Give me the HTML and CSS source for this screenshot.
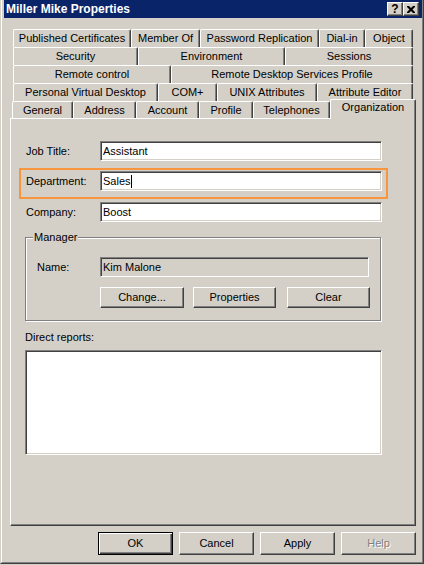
FILE: index.html
```html
<!DOCTYPE html>
<html lang="en">
<head>
<meta charset="utf-8">
<title>Miller Mike Properties</title>
<link rel="stylesheet" href="styles.css">
</head>
<body>
<div class="window">
  <div class="frame">
    <div class="titlebar">
      <span class="title">Miller Mike Properties</span>
      <div class="caption-btns">
        <span class="cap-btn help">?</span>
        <span class="cap-btn close">
          <svg width="8" height="7" viewBox="0 0 8 7"><path d="M0 0h2l2 2 2-2h2v1L5.5 3.5 8 6v1H6L4 5 2 7H0V6l2.5-2.5L0 1z" fill="#000"/></svg>
        </span>
      </div>
    </div>

    <div class="tabs">
      <div class="tab-row">
        <div class="tab w118">Published Certificates</div>
        <div class="tab w69">Member Of</div>
        <div class="tab w119">Password Replication</div>
        <div class="tab w46">Dial-in</div>
        <div class="tab w48">Object</div>
      </div>
      <div class="tab-row">
        <div class="tab w125">Security</div>
        <div class="tab w147">Environment</div>
        <div class="tab w128">Sessions</div>
      </div>
      <div class="tab-row">
        <div class="tab w158">Remote control</div>
        <div class="tab w242">Remote Desktop Services Profile</div>
      </div>
      <div class="tab-row">
        <div class="tab w145">Personal Virtual Desktop</div>
        <div class="tab w59">COM+</div>
        <div class="tab w100">UNIX Attributes</div>
        <div class="tab w96">Attribute Editor</div>
      </div>
      <div class="tab-row last">
        <div class="tab w61">General</div>
        <div class="tab w63">Address</div>
        <div class="tab w63">Account</div>
        <div class="tab w54">Profile</div>
        <div class="tab w77">Telephones</div>
        <div class="tab selected">Organization</div>
      </div>
    </div>

    <div class="panel">
      <div class="field-row">
        <label class="lbl">Job Title:</label>
        <div class="input">Assistant</div>
      </div>
      <div class="highlight">
        <div class="field-row inner">
          <label class="lbl">Department:</label>
          <div class="input">Sales<span class="caret"></span></div>
        </div>
      </div>
      <div class="field-row company">
        <label class="lbl">Company:</label>
        <div class="input">Boost</div>
      </div>

      <div class="groupbox">
        <span class="legend">Manager</span>
        <div class="name-row">
          <label class="lbl name-lbl">Name:</label>
          <div class="input readonly">Kim Malone</div>
        </div>
        <div class="mgr-buttons">
          <div class="btn b-change">Change...</div>
          <div class="btn b-props">Properties</div>
          <div class="btn b-clear">Clear</div>
        </div>
      </div>

      <div class="dr-label">Direct reports:</div>
      <div class="listbox"></div>
    </div>

    <div class="dialog-buttons">
      <div class="btn dlg default">OK</div>
      <div class="btn dlg">Cancel</div>
      <div class="btn dlg">Apply</div>
      <div class="btn dlg disabled">Help</div>
    </div>
  </div>
</div>
</body>
</html>
```

FILE: styles.css
```css
* { box-sizing: border-box; }
html { background: #d4d0c8; }
body {
  margin: 0;
  width: 424px;
  height: 565px;
  overflow: hidden;
  font-family: "Liberation Sans", Arial, sans-serif;
  font-size: 11px;
  color: #000;
  background: #d4d0c8;
}

.window {
  width: 424px;
  height: 564px;
  border-left: 1px solid #d4d0c8;
  border-right: 1px solid #404040;
  border-bottom: 1px solid #404040;
}
.frame {
  height: 100%;
  border-left: 1px solid #fff;
  border-right: 1px solid #808080;
  border-bottom: 1px solid #808080;
  padding-left: 2px;
  display: flex;
  flex-direction: column;
}

/* title bar */
.titlebar {
  height: 18px;
  background: #0a246a;
  display: flex;
  align-items: center;
  justify-content: space-between;
  padding-left: 2px;
  padding-right: 3px;
}
.title {
  color: #fff;
  font-weight: bold;
  font-size: 12px;
  line-height: 14px;
}
.caption-btns { display: flex; }
.cap-btn {
  width: 16px;
  height: 14px;
  background: #d4d0c8;
  border: 1px solid;
  border-color: #fff #404040 #404040 #fff;
  box-shadow: inset -1px -1px 0 #808080;
  display: flex;
  align-items: center;
  justify-content: center;
  font-weight: bold;
  font-size: 12px;
  line-height: 11px;
}

/* tabs */
.tabs { margin-top: 11px; }
.tab-row {
  display: flex;
  height: 18px;
  margin-left: 9px;
  width: 400px;
}
.tab-row.last {
  margin-left: 8px;
  height: 17px;
  width: 404px;
}
.tab {
  flex: none;
  height: 18px;
  border-top: 1px solid #fff;
  border-left: 1px solid #fff;
  border-right: 1px solid #404040;
  box-shadow: inset -1px 0 0 #808080;
  border-radius: 2px 2px 0 0;
  background: #d4d0c8;
  text-align: center;
  line-height: 16px;
  white-space: nowrap;
  overflow: hidden;
}
.tab-row.last .tab { height: 17px; }
.tab-row.last .tab.selected {
  width: 86px;
  height: 20px;
  margin-top: -2px;
  position: relative;
  z-index: 2;
  line-height: 15px;
}
.w118 { width: 118px; }
.w69 { width: 69px; }
.w119 { width: 119px; }
.w46 { width: 46px; }
.w48 { width: 48px; }
.w125 { width: 125px; }
.w147 { width: 147px; }
.w128 { width: 128px; }
.w158 { width: 158px; }
.w242 { width: 242px; }
.w145 { width: 145px; }
.w59 { width: 59px; }
.w100 { width: 100px; }
.w96 { width: 96px; }
.w61 { width: 61px; }
.w63 { width: 63px; }
.w54 { width: 54px; }
.w77 { width: 77px; }

/* panel */
.panel {
  margin-left: 6px;
  width: 406px;
  height: 408px;
  flex: none;
  border-top: 1px solid #fff;
  border-left: 1px solid #fff;
  border-right: 1px solid #404040;
  border-bottom: 1px solid #404040;
  box-shadow: inset -1px -1px 0 #808080;
  padding-top: 22px;
  display: flex;
  flex-direction: column;
  align-items: flex-start;
}

.field-row {
  display: flex;
  align-items: center;
  height: 20px;
  padding-left: 15px;
}
.field-row.inner { padding-left: 0; }
.field-row.company { margin-top: 3px; }
.lbl {
  width: 74px;
  flex: none;
  line-height: 13px;
}
.input {
  width: 282px;
  height: 20px;
  flex: none;
  background: #fff;
  border: 1px solid;
  border-color: #808080 #fff #fff #808080;
  box-shadow: inset 1px 1px 0 #404040, inset -1px -1px 0 #d4d0c8;
  padding-left: 2px;
  line-height: 17px;
  white-space: nowrap;
  display: flex;
  align-items: center;
}
.caret {
  display: inline-block;
  width: 1px;
  height: 13px;
  background: #000;
}

.highlight {
  margin: 7px 0 0 8px;
  width: 369px;
  border: 2px solid #f7963f;
  padding: 1px 0 6px 5px;
}

/* manager group */
.groupbox {
  position: relative;
  margin: 15px 0 0 14px;
  width: 356px;
  height: 84px;
  border: 1px solid #808080;
  box-shadow: inset 1px 1px 0 #fff, 1px 1px 0 #fff;
  padding: 19px 0 0 11px;
}
.legend {
  position: absolute;
  top: -7px;
  left: 7px;
  padding: 0 1px;
  background: #d4d0c8;
  line-height: 13px;
}
.name-row {
  display: flex;
  align-items: center;
  height: 20px;
}
.name-lbl { width: 63px; }
.input.readonly {
  width: 269px;
  background: #d4d0c8;
}
.mgr-buttons {
  display: flex;
  margin-top: 10px;
  margin-left: 63px;
}
.btn {
  flex: none;
  height: 21px;
  background: #d4d0c8;
  border: 1px solid;
  border-color: #fff #404040 #404040 #fff;
  box-shadow: inset -1px -1px 0 #808080;
  display: flex;
  align-items: center;
  justify-content: center;
  line-height: 13px;
}
.b-change { width: 84px; }
.b-props { width: 83px; margin-left: 9px; }
.b-clear { width: 83px; margin-left: 11px; }

.dr-label {
  margin: 10px 0 0 14px;
  line-height: 13px;
}
.listbox {
  margin: 6px 0 0 14px;
  width: 357px;
  height: 105px;
  background: #fff;
  border: 1px solid;
  border-color: #808080 #fff #fff #808080;
  box-shadow: inset 1px 1px 0 #404040, inset -1px -1px 0 #d4d0c8;
}

/* dialog buttons */
.dialog-buttons {
  display: flex;
  gap: 6px;
  margin-top: 6px;
  padding-left: 94px;
}
.btn.dlg {
  width: 75px;
  height: 23px;
}
.btn.default {
  border: 1px solid #000;
  box-shadow: inset 1px 1px 0 #fff, inset -1px -1px 0 #404040, inset -2px -2px 0 #808080;
}
.btn.disabled {
  color: #808080;
  text-shadow: 1px 1px 0 #fff;
}
```
